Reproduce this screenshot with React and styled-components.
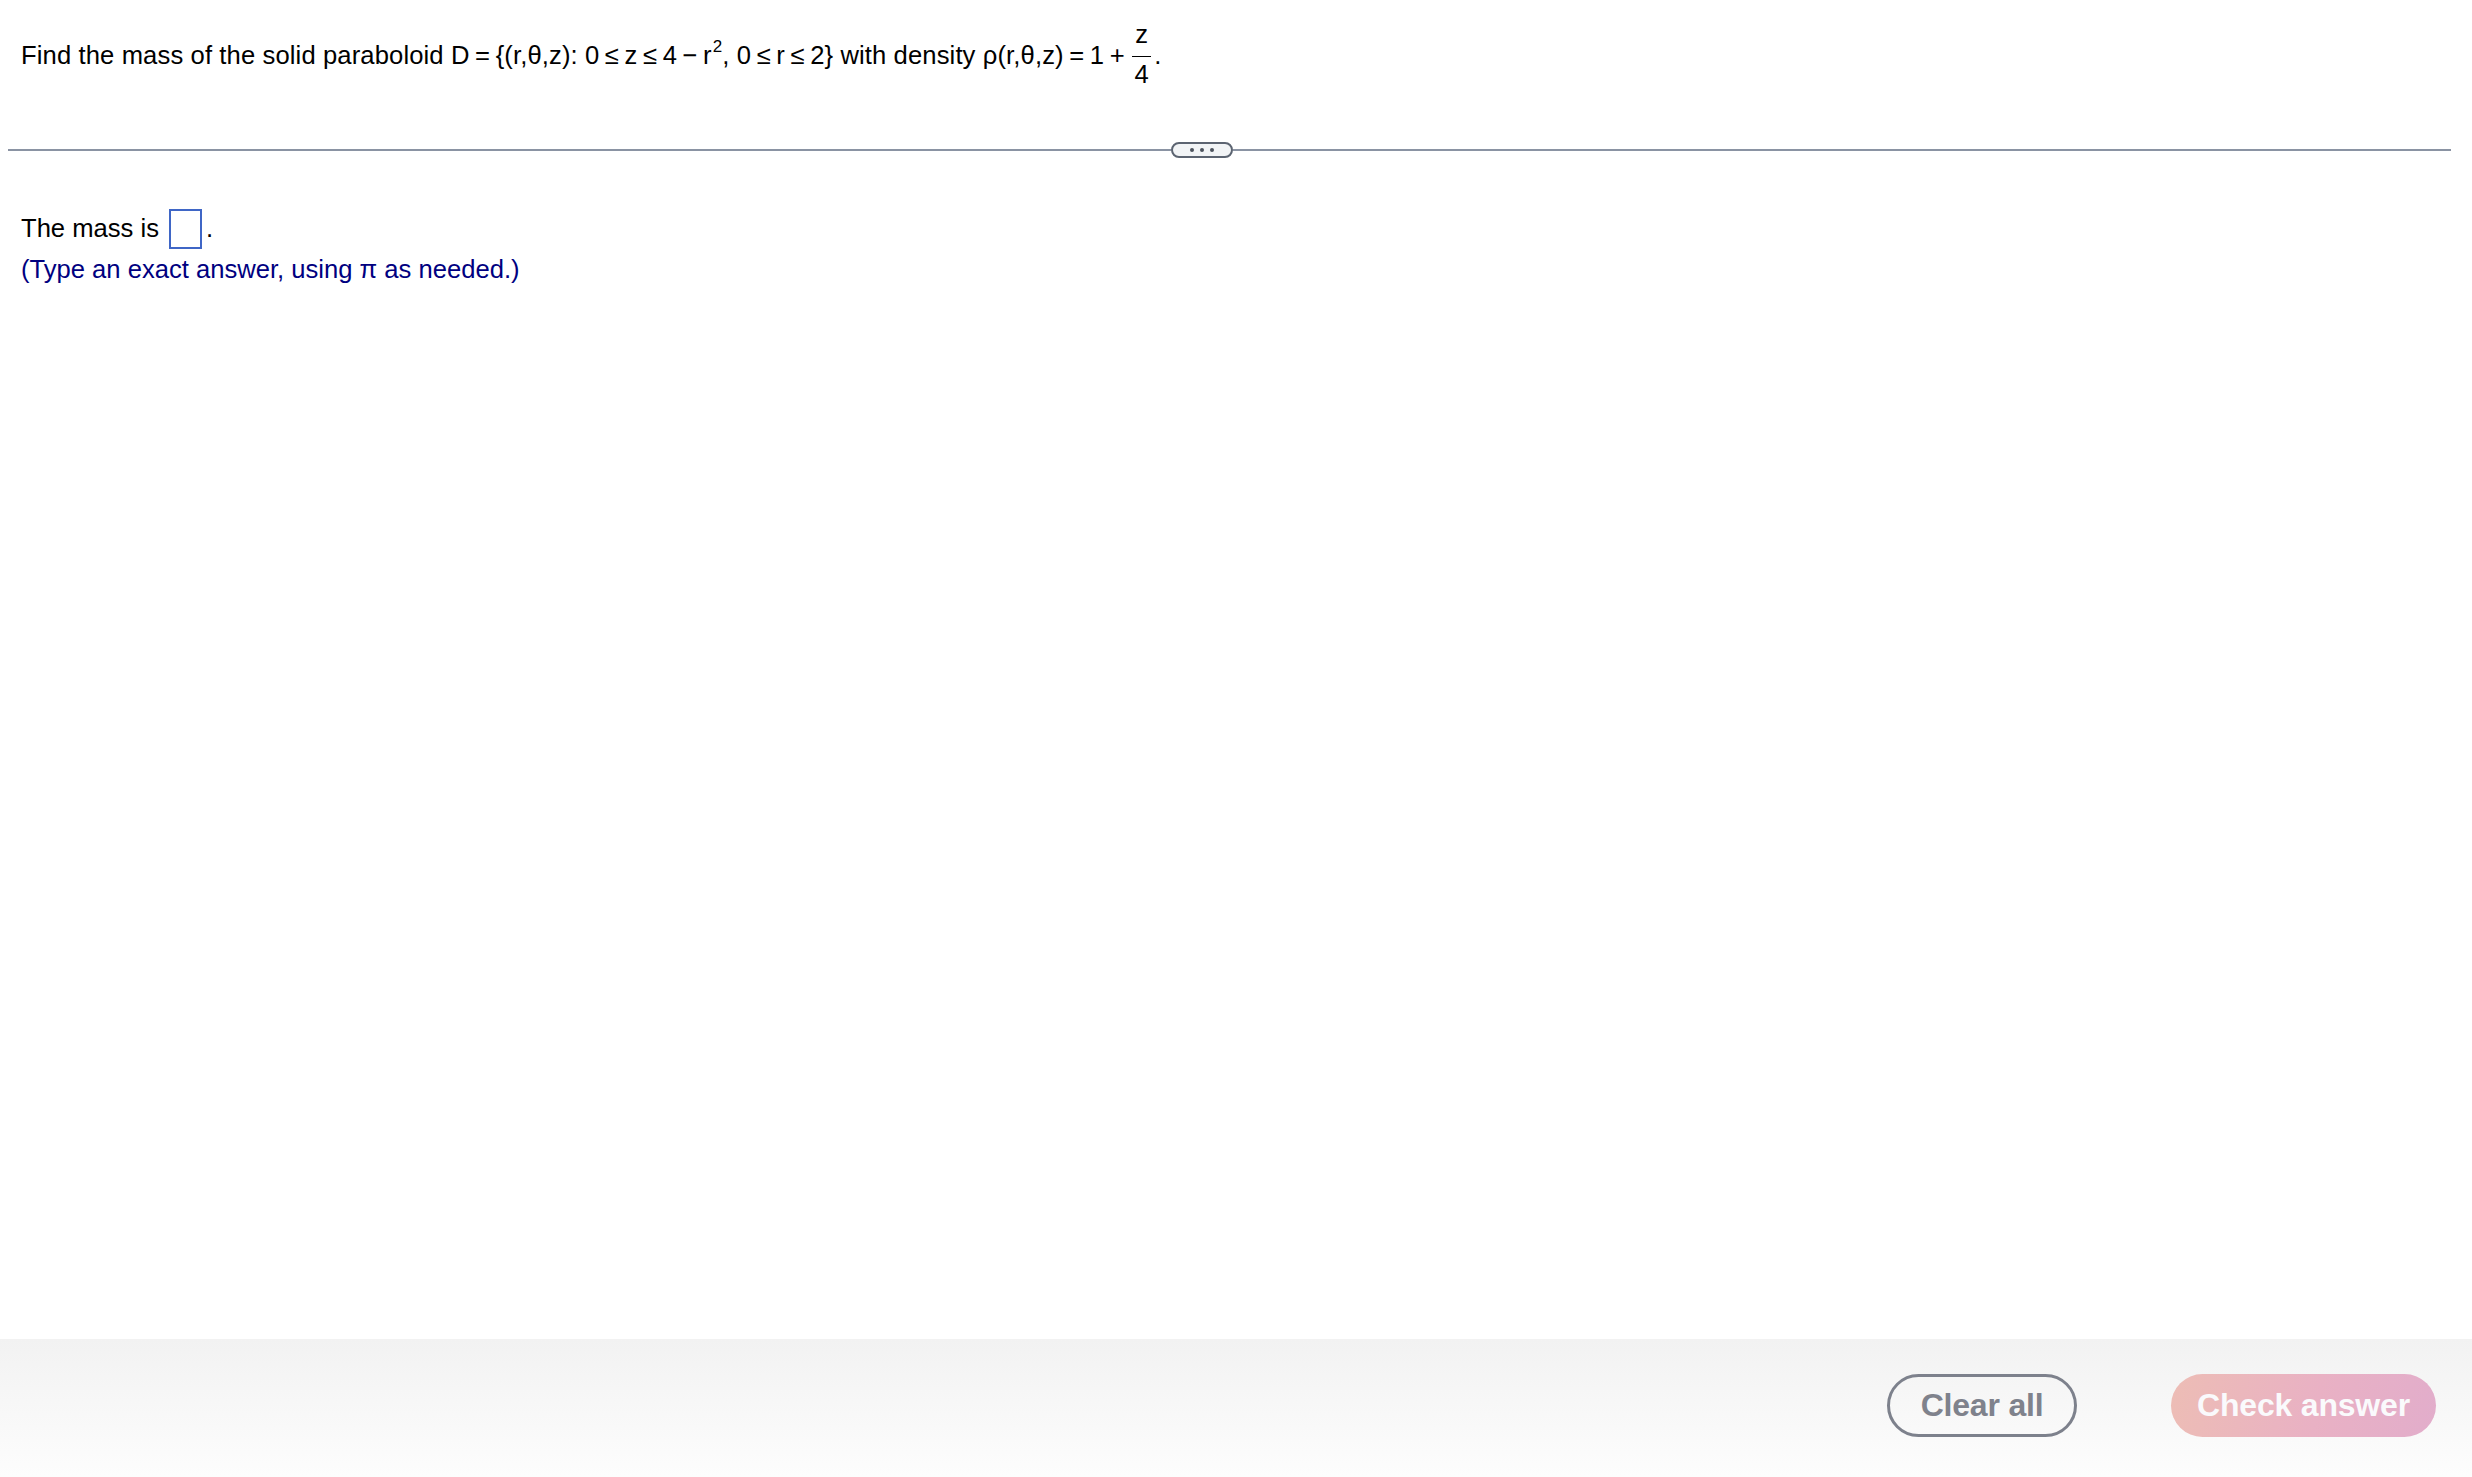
import React from "react"
import styled, { createGlobalStyle } from "styled-components"

const GlobalStyle = createGlobalStyle`
  html, body {
    margin: 0;
    padding: 0;
    background: #fff;
  }
  body {
    font-family: "Liberation Sans", Arial, sans-serif;
    color: #000;
  }
`

const Page = styled.div`
  display: flex;
  flex-direction: column;
  min-height: 100vh;
`

const Question = styled.p`
  margin: 0;
  padding: 22px 21px 0;
  font-size: 25.6px;
  line-height: normal;
  letter-spacing: 0.12px;
  white-space: nowrap;
`

const Op = styled.span`
  padding: 0 5.5px;
`

const Sup = styled.sup`
  font-size: 17px;
  vertical-align: 12px;
  line-height: 0;
  margin-left: 1px;
`

const Fraction = styled.span`
  display: inline-flex;
  flex-direction: column;
  align-items: center;
  vertical-align: 21px;
  margin: 0 3px 0 2px;
`

const Numerator = styled.span`
  line-height: 1;
  padding: 0 3px 8px;
  border-bottom: 1.6px solid #000;
`

const Denominator = styled.span`
  line-height: 1;
  padding-top: 5px;
`

const Divider = styled.div`
  display: flex;
  align-items: center;
  margin: 55px 21px 0 8px;
`

const Rule = styled.div`
  flex: ${p => p.grow};
  height: 1.6px;
  background: #8a93a3;
`

const MorePill = styled.div`
  display: flex;
  align-items: center;
  justify-content: center;
  gap: 6px;
  width: 62px;
  height: 16px;
  box-sizing: border-box;
  border: 2px solid #5c6471;
  border-radius: 8px;
  background: #f2f4f6;
`

const Dot = styled.span`
  width: 4px;
  height: 4px;
  border-radius: 50%;
  background: #4d535e;
`

const Answer = styled.div`
  padding: 51px 21px 0;
  font-size: 25.6px;
`

const AnswerLine = styled.div`
  margin-bottom: 6px;
  white-space: nowrap;
`

const InputBox = styled.span`
  display: inline-block;
  width: 33px;
  height: 40px;
  box-sizing: border-box;
  border: 2px solid #3f66c6;
  vertical-align: -12px;
  margin: 0 4px 0 3px;
`

const Hint = styled.div`
  color: #000080;
`

const Footer = styled.div`
  margin-top: auto;
  height: 138px;
  box-sizing: border-box;
  display: flex;
  justify-content: flex-end;
  align-items: flex-start;
  gap: 94px;
  padding: 35px 36px 0;
  background: linear-gradient(to bottom, #f2f2f2, #fdfdfd);
`

const Button = styled.button`
  height: 63px;
  box-sizing: border-box;
  border-radius: 32px;
  font-family: "Liberation Sans", Arial, sans-serif;
  font-weight: bold;
  font-size: 32px;
  letter-spacing: -0.2px;
  cursor: pointer;
  ${p =>
    p.primary
      ? `
    width: 265px;
    border: none;
    color: #fafafc;
    background: linear-gradient(100deg, #edbdb5 0%, #e9b1c4 55%, #e2adcb 100%);
  `
      : `
    width: 190px;
    border: 3px solid #7d818c;
    color: #7f828c;
    background: transparent;
  `}
`

export default function App() {
  return (
    <Page>
      <GlobalStyle />
      <Question>
        Find the mass of the solid paraboloid D<Op>=</Op>
        {"{(r,θ,z): 0"}
        <Op>≤</Op>z<Op>≤</Op>4<Op>−</Op>r<Sup>2</Sup>, 0<Op>≤</Op>r<Op>≤</Op>
        {"2} with density ρ(r,θ,z)"}
        <Op>=</Op>1<Op>+</Op>
        <Fraction>
          <Numerator>z</Numerator>
          <Denominator>4</Denominator>
        </Fraction>
        .
      </Question>
      <Divider>
        <Rule grow={1163} />
        <MorePill>
          <Dot />
          <Dot />
          <Dot />
        </MorePill>
        <Rule grow={1218} />
      </Divider>
      <Answer>
        <AnswerLine>
          The mass is <InputBox />.
        </AnswerLine>
        <Hint>(Type an exact answer, using π as needed.)</Hint>
      </Answer>
      <Footer>
        <Button>Clear all</Button>
        <Button primary>Check answer</Button>
      </Footer>
    </Page>
  )
}
